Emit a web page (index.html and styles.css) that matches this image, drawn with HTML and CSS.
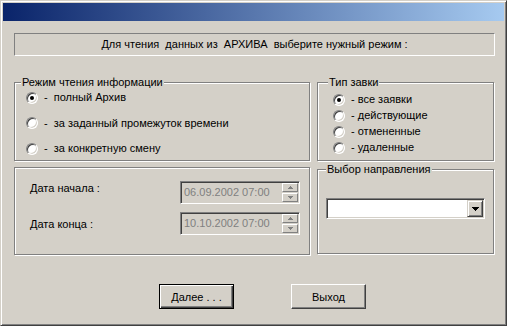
FILE: index.html
```html
<!DOCTYPE html>
<html lang="ru">
<head>
  <meta charset="UTF-8">
  <title>Чтение архива</title>
  <link rel="stylesheet" href="styles.css">
</head>
<body>

  <div class="window">
    <div class="title-bar"></div>

    <div class="content">
      <div class="hint">Для чтения  данных из  АРХИВА  выберите нужный режим :</div>

      <div class="panels">
        <div class="column">
          <div class="group mode">
            <div class="group-title">Режим чтения информации</div>
            <div class="radio-list">
              <label class="radio-row"><span class="radio checked"></span><span class="caption">-  полный Архив</span></label>
              <label class="radio-row"><span class="radio"></span><span class="caption">-  за заданный промежуток времени</span></label>
              <label class="radio-row"><span class="radio"></span><span class="caption">-  за конкретную смену</span></label>
            </div>
          </div>

          <div class="group dates">
            <div class="date-row">
              <span class="date-label">Дата начала :</span>
              <div class="picker">
                <span class="picker-value">06.09.2002 07:00</span>
                <span class="spin">
                  <span class="spin-btn"><svg width="5" height="3" viewBox="0 0 5 3"><path d="M2 0h1v1h1v1h1v1H0V2h1V1h1z" fill="#808080"/></svg></span>
                  <span class="spin-btn"><svg width="5" height="3" viewBox="0 0 5 3"><path d="M0 0h5v1H4v1H3v1H2V2H1V1H0z" fill="#808080"/></svg></span>
                </span>
              </div>
            </div>
            <div class="date-row">
              <span class="date-label low">Дата конца :</span>
              <div class="picker">
                <span class="picker-value">10.10.2002 07:00</span>
                <span class="spin">
                  <span class="spin-btn"><svg width="5" height="3" viewBox="0 0 5 3"><path d="M2 0h1v1h1v1h1v1H0V2h1V1h1z" fill="#808080"/></svg></span>
                  <span class="spin-btn"><svg width="5" height="3" viewBox="0 0 5 3"><path d="M0 0h5v1H4v1H3v1H2V2H1V1H0z" fill="#808080"/></svg></span>
                </span>
              </div>
            </div>
          </div>
        </div>

        <div class="column">
          <div class="group kind">
            <div class="group-title">Тип завки</div>
            <div class="radio-list tight">
              <label class="radio-row"><span class="radio checked"></span><span class="caption">- все заявки</span></label>
              <label class="radio-row"><span class="radio"></span><span class="caption">- действующие</span></label>
              <label class="radio-row"><span class="radio"></span><span class="caption">- отмененные</span></label>
              <label class="radio-row"><span class="radio"></span><span class="caption">- удаленные</span></label>
            </div>
          </div>

          <div class="group direction">
            <div class="group-title">Выбор направления</div>
            <div class="combo">
              <span class="combo-value"></span>
              <span class="combo-btn"><svg width="7" height="4" viewBox="0 0 7 4"><path d="M0 0h7v1H6v1H5v1H4v1H3V3H2V2H1V1H0z" fill="#000"/></svg></span>
            </div>
          </div>
        </div>
      </div>

      <div class="buttons">
        <button class="btn default">Далее . . .</button>
        <button class="btn">Выход</button>
      </div>
    </div>
  </div>

</body>
</html>
```

FILE: styles.css
```css
* {
  box-sizing: border-box;
}

body {
  margin: 0;
  background: #d4d0c8;
  font-family: "Liberation Sans", Arial, sans-serif;
  font-size: 11px;
  color: #000;
}

.window {
  width: 507px;
  height: 326px;
  padding: 2px;
  background: #d4d0c8;
  border: 1px solid;
  border-color: #d4d0c8 #404040 #404040 #d4d0c8;
  box-shadow: inset 1px 1px #fff, inset -1px -1px #808080;
}

.title-bar {
  height: 18px;
  background: linear-gradient(to right, #0a246a, #a6caf0);
}

.content {
  padding: 12px 0 0 11px;
}

.hint {
  width: 481px;
  height: 23px;
  border: 1px solid;
  border-color: #808080 #fff #fff #808080;
  line-height: 20px;
  text-align: center;
  white-space: pre;
}

.panels {
  display: flex;
  gap: 7px;
  margin-top: 26px;
}

.column {
  display: flex;
  flex-direction: column;
}

.group {
  border: 1px solid #808080;
  box-shadow: inset 1px 1px #fff, 1px 1px #fff;
}

.group-title {
  width: fit-content;
  margin: -7px 0 0 6px;
  padding: 0 1px;
  line-height: 13px;
  background: #d4d0c8;
}

.mode {
  width: 296px;
  height: 79px;
}

.dates {
  width: 296px;
  height: 88px;
  margin-top: 6px;
  padding: 13px 0 0 15px;
}

.kind {
  width: 177px;
  height: 79px;
}

.kind .group-title {
  margin-left: 10px;
}

.direction {
  width: 177px;
  height: 85px;
  margin-top: 8px;
}

.direction .group-title {
  margin-left: 8px;
}

.radio-list {
  display: flex;
  flex-direction: column;
  gap: 12.5px;
  margin: 2px 0 0 11px;
}

.radio-list.tight {
  gap: 3px;
  margin: 4px 0 0 15px;
}

.radio-row {
  display: flex;
  align-items: center;
  gap: 6px;
  height: 13px;
}

.radio {
  position: relative;
  width: 12px;
  height: 12px;
  border-radius: 50%;
  background: #fff;
  border: 1px solid;
  border-color: #808080 #fff #fff #808080;
  box-shadow: inset 1px 1px #404040, inset -1px -1px #d4d0c8;
}

.radio.checked::after {
  content: "";
  position: absolute;
  left: 3px;
  top: 3px;
  width: 4px;
  height: 4px;
  border-radius: 50%;
  background: #000;
}

.caption {
  white-space: pre;
  line-height: 13px;
}

.date-row {
  display: flex;
  align-items: flex-start;
  height: 23px;
  margin-bottom: 8px;
}

.date-label {
  width: 150px;
  line-height: 13px;
  margin-top: 1px;
}

.date-label.low {
  margin-top: 6px;
}

.picker {
  display: flex;
  width: 120px;
  height: 23px;
  padding: 1px 1px 1px 0;
  background: #d4d0c8;
  border: 1px solid;
  border-color: #808080 #fff #fff #808080;
  box-shadow: inset 1px 1px #404040, inset -1px -1px #d4d0c8;
}

.picker-value {
  flex: 1;
  padding: 3px 0 0 3px;
  color: #808080;
  line-height: 13px;
}

.spin {
  display: flex;
  flex-direction: column;
  gap: 1px;
  width: 16px;
}

.spin-btn {
  display: flex;
  align-items: center;
  justify-content: center;
  height: 9px;
  border: 1px solid;
  border-color: #fff #808080 #808080 #fff;
}

.combo {
  display: flex;
  justify-content: space-between;
  width: 159px;
  height: 21px;
  margin: 22px 0 0 8px;
  padding: 1px;
  background: #fff;
  border: 1px solid;
  border-color: #808080 #fff #fff #808080;
  box-shadow: inset 1px 1px #404040, inset -1px -1px #d4d0c8;
}

.combo-btn {
  display: flex;
  align-items: center;
  justify-content: center;
  width: 16px;
  height: 17px;
  background: #d4d0c8;
  border: 1px solid;
  border-color: #d4d0c8 #404040 #404040 #d4d0c8;
  box-shadow: inset 1px 1px #fff, inset -1px -1px #808080;
}

.buttons {
  display: flex;
  gap: 57px;
  margin: 29px 0 0 145px;
}

.btn {
  width: 75px;
  height: 25px;
  padding: 0;
  font-family: inherit;
  font-size: 11px;
  color: #000;
  background: #d4d0c8;
  border: 1px solid;
  border-color: #fff #404040 #404040 #fff;
  box-shadow: inset -1px -1px #808080;
}

.btn.default {
  border-color: #000;
  box-shadow: inset 1px 1px #fff, inset -1px -1px #404040, inset -2px -2px #808080;
}
```
